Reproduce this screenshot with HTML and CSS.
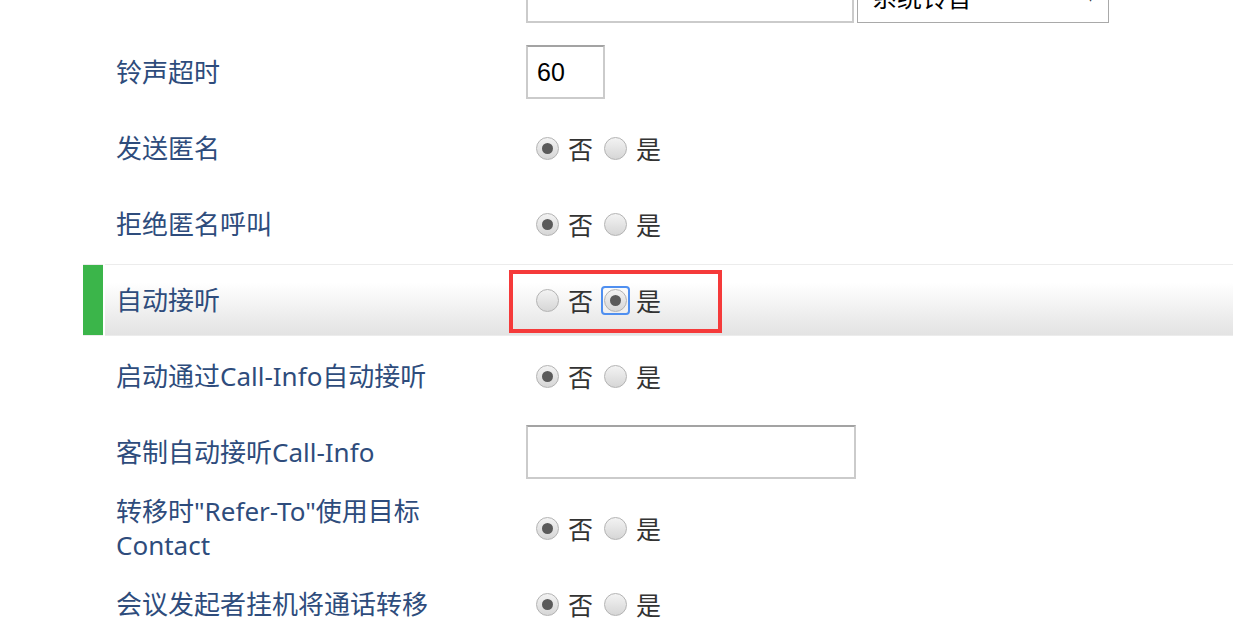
FILE: index.html
```html
<!DOCTYPE html>
<html lang="zh-CN">
<head>
    <meta charset="UTF-8">
    <meta name="viewport" content="width=device-width, initial-scale=1.0">
    <title>账号设置</title>
    <link rel="stylesheet" href="styles.css">
</head>
<body>

<div class="settings">
    <div class="row">
        <span class="mark"></span>
        <div class="cell">
            <div class="label"></div>
            <div class="value">
                <input type="text" class="text wide" value="">
                <div class="select">系统铃音<span class="arrow">▾</span></div>
            </div>
        </div>
    </div>

    <div class="row">
        <span class="mark"></span>
        <div class="cell">
            <div class="label">铃声超时</div>
            <div class="value">
                <input type="text" class="text short" value="60">
            </div>
        </div>
    </div>

    <div class="row">
        <span class="mark"></span>
        <div class="cell">
            <div class="label">发送匿名</div>
            <div class="value">
                <label class="opt"><input type="radio" name="anon" checked>否</label>
                <label class="opt"><input type="radio" name="anon">是</label>
            </div>
        </div>
    </div>

    <div class="row">
        <span class="mark"></span>
        <div class="cell">
            <div class="label">拒绝匿名呼叫</div>
            <div class="value">
                <label class="opt"><input type="radio" name="reject" checked>否</label>
                <label class="opt"><input type="radio" name="reject">是</label>
            </div>
        </div>
    </div>

    <div class="row active">
        <span class="mark"></span>
        <div class="cell">
            <div class="label">自动接听</div>
            <div class="value">
                <label class="opt"><input type="radio" name="auto">否</label>
                <label class="opt"><span class="focus"><input type="radio" name="auto" checked></span>是</label>
                <div class="callout"></div>
            </div>
        </div>
    </div>

    <div class="row">
        <span class="mark"></span>
        <div class="cell">
            <div class="label">启动通过Call-Info自动接听</div>
            <div class="value">
                <label class="opt"><input type="radio" name="callinfo" checked>否</label>
                <label class="opt"><input type="radio" name="callinfo">是</label>
            </div>
        </div>
    </div>

    <div class="row">
        <span class="mark"></span>
        <div class="cell">
            <div class="label">客制自动接听Call-Info</div>
            <div class="value">
                <input type="text" class="text medium" value="">
            </div>
        </div>
    </div>

    <div class="row">
        <span class="mark"></span>
        <div class="cell">
            <div class="label">转移时"Refer-To"使用目标Contact</div>
            <div class="value">
                <label class="opt"><input type="radio" name="refer" checked>否</label>
                <label class="opt"><input type="radio" name="refer">是</label>
            </div>
        </div>
    </div>

    <div class="row">
        <span class="mark"></span>
        <div class="cell">
            <div class="label">会议发起者挂机将通话转移</div>
            <div class="value">
                <label class="opt"><input type="radio" name="conf" checked>否</label>
                <label class="opt"><input type="radio" name="conf">是</label>
            </div>
        </div>
    </div>
</div>

</body>
</html>
```

FILE: styles.css
```css
body {
    margin: 0;
    background-color: #fff;
    font-family: "Noto Sans", "Noto Sans CJK SC", sans-serif;
    overflow: hidden;
}
.settings {
    display: flex;
    flex-direction: column;
    gap: 4px;
    margin-top: -40px; /* page is scrolled */
    padding-left: 83px;
}
.row {
    display: flex;
    height: 72px;
}
.mark {
    width: 20px;
    margin-right: 2px;
    border-top: 1px solid transparent;
    border-bottom: 1px solid transparent;
}
.cell {
    flex: 1;
    display: flex;
    align-items: center;
    border-top: 1px solid transparent;
    border-bottom: 1px solid transparent;
}
.row.active .mark {
    background-color: #3bb54a;
    border-color: #ececec;
}
.row.active .cell {
    background: linear-gradient(#fff 25%, #e3e3e3);
    border-color: #ececec;
}
.label {
    width: 421px;
    box-sizing: border-box;
    padding: 0 70px 0 11px;
    font-size: 26px;
    line-height: 34px;
    color: #2e4c7c;
}
.value {
    position: relative;
    align-self: stretch;
    display: flex;
    align-items: center;
    font-size: 25px;
    color: #333;
}
.text {
    box-sizing: border-box;
    height: 54px;
    border: 2px solid #cbcbcb;
    border-top-color: #a3a3a3;
    padding: 0 9px;
    font-family: "Liberation Sans", Arial, sans-serif;
    font-size: 25px;
    color: #000;
    outline: none;
}
.text.short {
    width: 79px;
}
.text.medium {
    width: 330px;
}
.text.wide {
    width: 328px;
}
.select {
    box-sizing: border-box;
    width: 252px;
    height: 54px;
    margin-left: 3px;
    border: 1px solid #a9a9a9;
    padding: 0 14px;
    display: flex;
    align-items: center;
    justify-content: space-between;
    color: #000;
}
.arrow {
    font-size: 14px;
    color: #333;
}
.opt {
    display: inline-flex;
    align-items: center;
    gap: 9px;
    margin-left: 10px;
}
.opt + .opt {
    margin-left: 11px;
}
input[type="radio"] {
    appearance: none;
    -webkit-appearance: none;
    position: relative;
    box-sizing: border-box;
    width: 23px;
    height: 23px;
    margin: 0;
    border: 1px solid #b3b3b3;
    border-radius: 50%;
    background: linear-gradient(#f3f3f3, #d6d6d6);
}
input[type="radio"]:checked::after {
    content: "";
    position: absolute;
    left: 50%;
    top: 50%;
    width: 11px;
    height: 11px;
    margin: -5.5px 0 0 -5.5px;
    border-radius: 50%;
    background-color: #5a5a5a;
}
.focus {
    display: inline-flex;
    padding: 1px;
    margin: -3px;
    border: 2px solid #4f8ff0;
    border-radius: 4px;
}
.callout {
    position: absolute;
    left: -17px;
    top: 5px;
    width: 213px;
    height: 63px;
    box-sizing: border-box;
    border: 4px solid #f53a3a;
}
```
